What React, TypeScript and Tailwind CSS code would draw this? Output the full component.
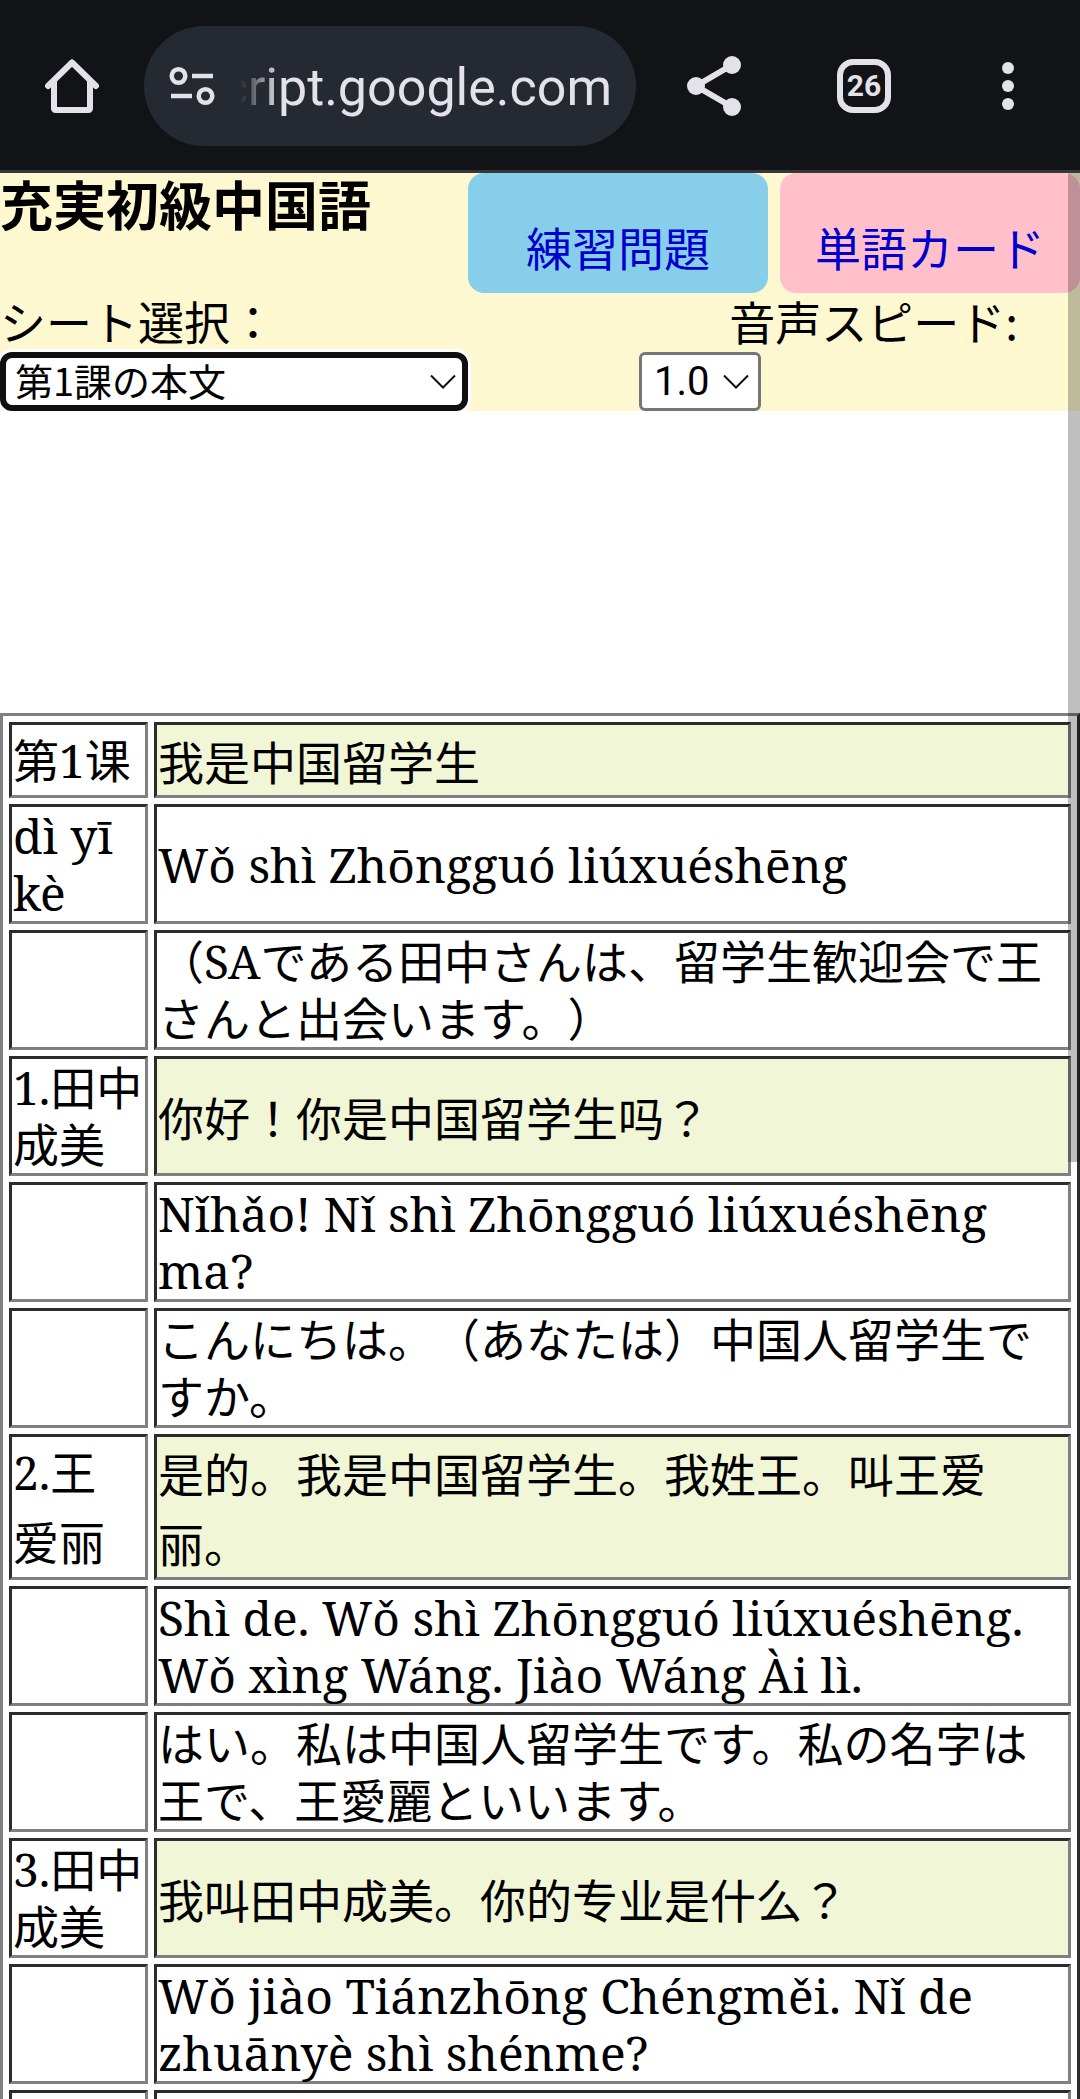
import React, { useState } from "react";

type Row = {
  speaker?: string;
  text?: string;
  kind: "hanzi" | "pinyin" | "kana";
  tall?: boolean;
};

const rows: Row[] = [
  { speaker: "第1课", text: "我是中国留学生", kind: "hanzi", tall: true },
  { speaker: "dì yī kè", text: "Wǒ shì Zhōngguó liúxuéshēng", kind: "pinyin" },
  { text: "（SAである田中さんは、留学生歓迎会で王さんと出会います。）", kind: "kana" },
  { speaker: "1.田中成美", text: "你好！你是中国留学生吗？", kind: "hanzi" },
  { text: "Nǐhǎo! Nǐ shì Zhōngguó liúxuéshēng ma?", kind: "pinyin" },
  { text: "こんにちは。（あなたは）中国人留学生ですか。", kind: "kana" },
  { speaker: "2.王 爱丽", text: "是的。我是中国留学生。我姓王。叫王爱丽。", kind: "hanzi", tall: true },
  { text: "Shì de. Wǒ shì Zhōngguó liúxuéshēng. Wǒ xìng Wáng. Jiào Wáng Ài lì.", kind: "pinyin" },
  { text: "はい。私は中国人留学生です。私の名字は王で、王愛麗といいます。", kind: "kana" },
  { speaker: "3.田中成美", text: "我叫田中成美。你的专业是什么？", kind: "hanzi" },
  { text: "Wǒ jiào Tiánzhōng Chéngměi. Nǐ de zhuānyè shì shénme?", kind: "pinyin" },
  { kind: "kana" },
];

function BrowserBar() {
  return (
    <div className="flex h-[173px] shrink-0 items-center border-b-[3px] border-[#37373a] bg-[#111317] pt-0.5 text-[#e3e2e9]">
      <button type="button" aria-label="ホーム" className="flex w-36 justify-center">
        <svg width="54" height="54" viewBox="0 0 54 54" fill="none" stroke="currentColor" strokeWidth="6" strokeLinecap="round" strokeLinejoin="round">
          <path d="M3 27 27 3.500 51 27" />
          <path d="M9 23V49.500a1.500 1.500 0 0 0 1.500 1.500h33a1.500 1.500 0 0 0 1.500-1.500V23" />
        </svg>
      </button>
      <div className="flex h-[120px] min-w-0 flex-1 items-center gap-6 rounded-full bg-[#252931] pr-6 pl-6">
        <button type="button" aria-label="サイト情報" className="shrink-0">
          <svg width="48" height="42" viewBox="0 0 48 42" fill="none" stroke="currentColor" strokeWidth="4.500">
            <circle cx="10.500" cy="11" r="6.800" />
            <path d="M24 11h21M3 31h21" />
            <circle cx="37.500" cy="31" r="6.800" />
          </svg>
        </button>
        <div className="flex min-w-0 flex-1 justify-end overflow-hidden [mask-image:linear-gradient(to_right,transparent,black_40px)]">
          <span className="pt-1 font-[Roboto,sans-serif] text-[52px] leading-[72px] whitespace-nowrap">script.google.com</span>
        </div>
      </div>
      <button type="button" aria-label="共有" className="flex w-[156px] justify-center">
        <svg width="54" height="60" viewBox="0 0 54 60" fill="currentColor">
          <path d="M45 9 9 30 45 51" fill="none" stroke="currentColor" strokeWidth="6" />
          <circle cx="45" cy="9" r="9" />
          <circle cx="9" cy="30" r="9" />
          <circle cx="45" cy="51" r="9" />
        </svg>
      </button>
      <button type="button" aria-label="タブ" className="flex w-36 justify-center">
        <span className="flex size-[54px] items-center justify-center rounded-2xl border-[6px] border-current font-[Roboto,sans-serif] text-[30px] leading-none font-bold">
          26
        </span>
      </button>
      <button type="button" aria-label="メニュー" className="flex w-36 justify-center">
        <svg width="12" height="48" viewBox="0 0 12 48" fill="currentColor">
          <circle cx="6" cy="6" r="6" />
          <circle cx="6" cy="24" r="6" />
          <circle cx="6" cy="42" r="6" />
        </svg>
      </button>
    </div>
  );
}

function Chevron({ className }: { className: string }) {
  return (
    <svg className={className} width="26" height="16" viewBox="0 0 26 16" fill="none" stroke="#111" strokeWidth="2">
      <path d="M1 1.500 13 13.500 25 1.500" />
    </svg>
  );
}

function LessonHeader() {
  const [sheet, setSheet] = useState("第1課の本文");
  const [speed, setSpeed] = useState("1.0");
  return (
    <header className="bg-[#fef8d0] font-['Noto_Sans_CJK_JP',sans-serif] text-[46px]">
      <div className="flex gap-3">
        <h1 className="-mr-3 flex-1 text-[53px] leading-[60px] font-bold whitespace-nowrap">充実初級中国語</h1>
        <a href="#practice" className="h-[120px] w-[300px] rounded-2xl bg-[#87ceeb] pt-[46px] text-center leading-[54px] text-[#0000cc]">
          練習問題
        </a>
        <a href="#cards" className="h-[120px] w-[300px] rounded-2xl bg-[#ffc0cb] pt-[46px] text-center leading-[54px] text-[#0000cc]">
          単語カード
        </a>
      </div>
      <div className="flex h-[59px] justify-between pr-[62px] leading-[54px]">
        <label htmlFor="sheet">シート選択：</label>
        <label htmlFor="speed">音声スピード:</label>
      </div>
      <div className="flex">
        <div className="relative w-[468px]">
          <select
            id="sheet"
            value={sheet}
            onChange={(e) => setSheet(e.target.value)}
            className="block h-[59px] w-full appearance-none rounded-xl border-[6px] border-[#101010] bg-white pb-1 pl-[9px] text-[38px] leading-[43px] shadow-[0_0_0_3px_white] outline-none"
          >
            <option>第1課の本文</option>
          </select>
          <Chevron className="pointer-events-none absolute top-[22px] right-3" />
        </div>
        <div className="relative ml-[171px] w-[122px]">
          <select
            id="speed"
            value={speed}
            onChange={(e) => setSpeed(e.target.value)}
            className="block h-[59px] w-full appearance-none rounded-md border-[3px] border-[#767676] bg-white pl-3 font-[Roboto,sans-serif] text-[40px] leading-[53px] outline-none"
          >
            <option>1.0</option>
          </select>
          <Chevron className="pointer-events-none absolute top-[22px] right-3" />
        </div>
      </div>
    </header>
  );
}

const cell = "border-[3px] border-t-[#2c2c2c] border-r-[#808080] border-b-[#808080] border-l-[#2c2c2c] pr-px pl-px py-0 align-middle";

const rowText = {
  hanzi: "text-[46px]",
  pinyin: "text-[48px]",
  kana: "text-[46px]",
};

function LessonTable() {
  return (
    <table className="mt-[302px] w-full table-fixed border-separate border-spacing-1.5 border-[3px] border-t-[#808080] border-r-[#2c2c2c] border-b-[#2c2c2c] border-l-[#808080] font-['Noto_Serif','DejaVu_Serif_Condensed','Noto_Sans_CJK_JP',serif] [text-spacing-trim:space-all]">
      <colgroup>
        <col className="w-[139px]" />
        <col />
      </colgroup>
      <tbody>
        {rows.map((row, i) => (
          <tr key={i} className={`${rowText[row.kind]} ${row.tall ? "h-[76px] leading-[70px]" : "h-[120px] leading-[57px]"}`}>
            <td className={cell}>{row.speaker}</td>
            <td className={row.kind === "hanzi" ? `${cell} bg-[#f1f6d6] font-['Noto_Sans_CJK_JP',sans-serif]` : cell}>
              {row.text}
            </td>
          </tr>
        ))}
      </tbody>
    </table>
  );
}

export default function App() {
  return (
    <div className="flex h-screen flex-col overflow-hidden bg-white text-black">
      <BrowserBar />
      <main className="relative min-h-0 flex-1">
        <LessonHeader />
        <LessonTable />
        <div className="absolute top-0 right-0 h-[989px] w-3 bg-black/25" />
      </main>
    </div>
  );
}
